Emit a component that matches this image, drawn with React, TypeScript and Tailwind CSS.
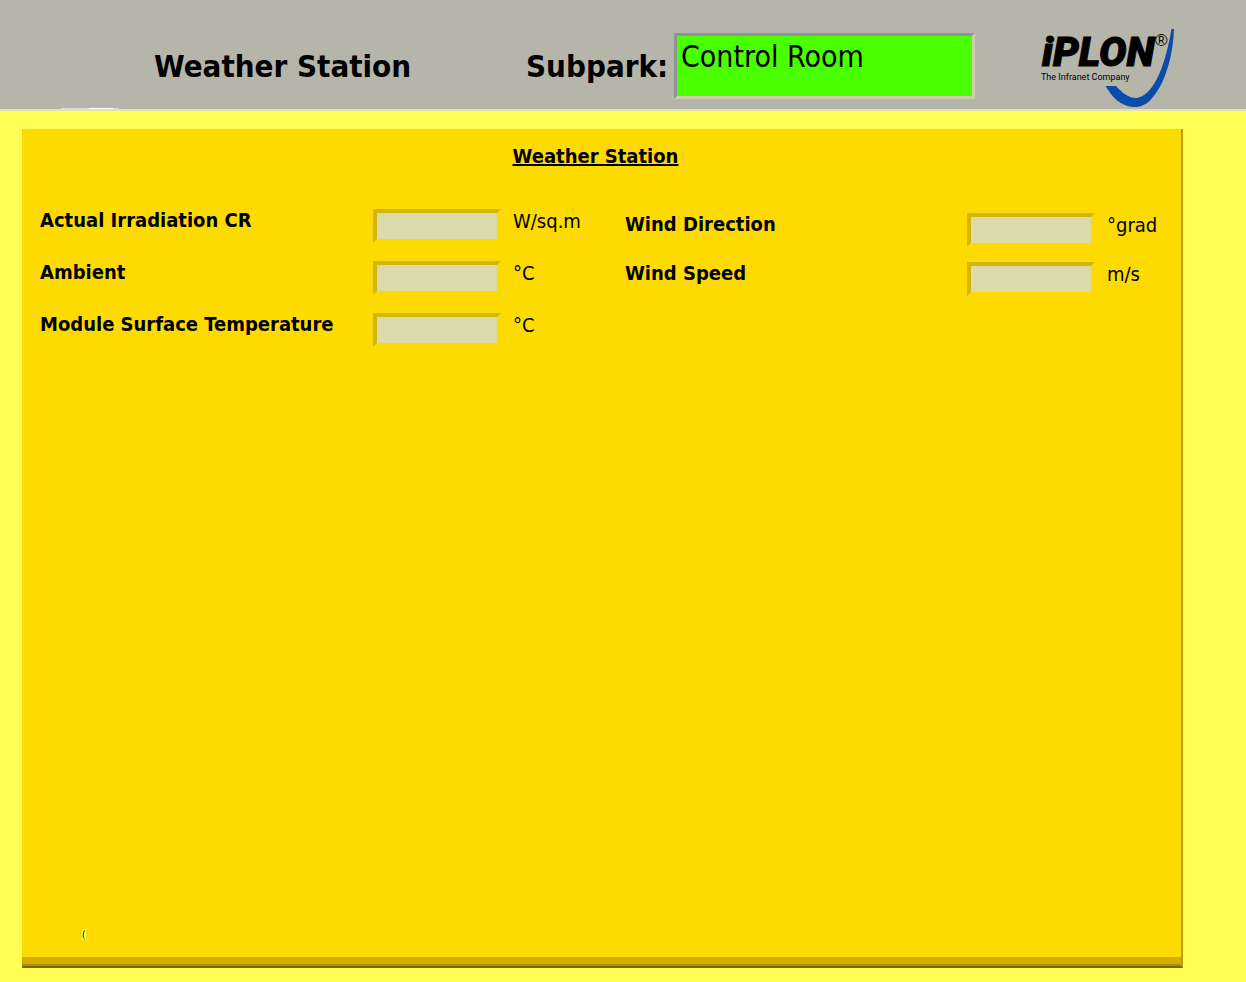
import { useId } from 'react';

type ReadingProps = {
  label: string;
  unit: string;
};

function Reading({ label, unit }: ReadingProps) {
  const id = useId();
  return (
    <div className="flex h-[34px] items-start">
      <label htmlFor={id} className="flex-1 whitespace-nowrap text-xl leading-6 font-bold">
        {label}
      </label>
      <input
        id={id}
        readOnly
        value=""
        className="mt-px h-[34px] w-[128px] border-4 border-t-[#d2b60a] border-r-[#fedb00] border-b-[#fedb00] border-l-[#d2b60a] bg-[#dbdaa8] px-1 outline-none"
      />
      <span className="mt-px w-20 pl-3 text-xl leading-6">{unit}</span>
    </div>
  );
}

function Logo() {
  return (
    <svg viewBox="0 0 136 82" className="h-[82px] w-[136px]" role="img" aria-label="iPLON The Infranet Company">
      <path d="M65.500 59 H76 C83 67 90 71.500 97 71 C115 68 126 35 131.500 2 L134 2 C133 30 125 56 113 70 C105 81 92 83 81 76 C74 72 70 66 65.500 59 Z" fill="#0a4cab" />
      <text x="2" y="39" fontFamily="Roboto, 'Liberation Sans', sans-serif" fontWeight="900" fontStyle="italic" fontSize="41" stroke="#000" strokeWidth="1">
        iPLON
      </text>
      <text x="115" y="19" fontFamily="'Liberation Sans', sans-serif" fontSize="17">
        ®
      </text>
      <text x="1" y="53" fontFamily="Roboto, 'Liberation Sans', sans-serif" fontSize="9">
        The Infranet Company
      </text>
    </svg>
  );
}

export default function App() {
  return (
    <div className="flex min-h-screen flex-col bg-[#ffff55] font-['DejaVu_Sans_Condensed','DejaVu_Sans',sans-serif] text-black">
      <header className="relative flex h-[111px] items-start border-b-2 border-[#e2e0b4] bg-[#b6b5a9] pr-[70px] pl-[154px]">
        <h1 className="mt-[47px] w-[372px] text-[31px] leading-[38px] font-bold whitespace-nowrap">Weather Station</h1>
        <label htmlFor="subpark" className="mt-[47px] w-[148px] text-[31px] leading-[38px] font-bold whitespace-nowrap">
          Subpark:
        </label>
        <input
          id="subpark"
          readOnly
          value="Control Room"
          className="mt-[33px] h-[66px] w-[301px] border-3 border-t-[#8e929a] border-r-[#cfcdad] border-b-[#cfcdad] border-l-[#8e929a] bg-[#4aff00] pb-5 pl-1 text-[30px] outline-none"
        />
        <div className="mt-[27px] ml-auto">
          <Logo />
        </div>
        <div className="absolute bottom-0 left-[61px] flex h-px w-[58px] bg-[#dcdfe0]">
          <div className="ml-7 w-6 bg-white" />
        </div>
      </header>
      <main className="mt-[18px] mr-[63px] mb-[14px] ml-[22px] flex flex-1 flex-col border-r-2 border-b-2 border-r-[#bd9d00] border-b-[#7d6500] bg-[#fedb00]">
        <h2 className="mt-[15px] pr-3 text-center text-xl leading-6 font-bold underline">Weather Station</h2>
        <div className="mt-10 flex flex-1 items-start justify-between pl-[18px]">
          <div className="flex w-[541px] flex-col gap-[18px]">
            <Reading label="Actual Irradiation CR" unit="W/sq.m" />
            <Reading label="Ambient" unit="°C" />
            <Reading label="Module Surface Temperature" unit="°C" />
          </div>
          <div className="mt-1 mr-[6px] flex w-[550px] flex-col gap-[15px]">
            <Reading label="Wind Direction" unit="°grad" />
            <Reading label="Wind Speed" unit="m/s" />
          </div>
        </div>
        <p className="mb-4 pl-[60px] text-[10px] leading-3">
          <span className="bg-[#ffff55]">(</span>
        </p>
        <div className="h-[9px] border-b-2 border-[#b08e00] bg-[#d3b000]" />
      </main>
    </div>
  );
}
